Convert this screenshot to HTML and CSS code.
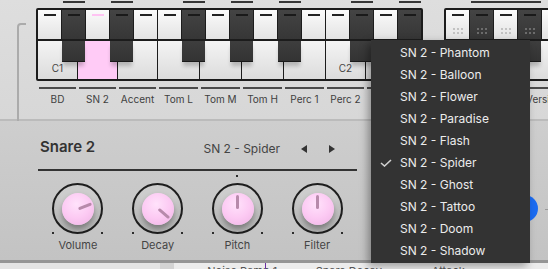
FILE: index.html
```html
<!DOCTYPE html>
<html lang="en">
<head>
    <meta charset="UTF-8">
    <title>Drum Kit - Snare 2</title>
    <link rel="stylesheet" href="styles.css">
</head>
<body>
    <div class="app">
        <div class="top-area">
            <div class="group-marks">
                <i></i><span></span><i></i><span></span><i></i><i></i><span></span><i></i><span></span><i></i><span></span><i></i><i></i><span></span><i></i><span></span><i></i><i></i><span class="wide"></span>
            </div>

            <div class="pad-groups">
                <div class="pad-group">
                    <div class="keyboard">
                        <div class="pads">
                            <div class="pad"></div>
                            <div class="pad dark"></div>
                            <div class="pad selected"></div>
                            <div class="pad dark"></div>
                            <div class="pad"></div>
                            <div class="pad"></div>
                            <div class="pad dark"></div>
                            <div class="pad"></div>
                            <div class="pad dark"></div>
                            <div class="pad"></div>
                            <div class="pad dark"></div>
                            <div class="pad"></div>
                            <div class="pad"></div>
                            <div class="pad dark"></div>
                            <div class="pad"></div>
                            <div class="pad dark"></div>
                        </div>
                        <div class="piano">
                            <div class="white"><span class="octave">C1</span></div>
                            <div class="white selected"></div>
                            <div class="white"></div>
                            <div class="white wide"></div>
                            <div class="white wide"></div>
                            <div class="white wide"></div>
                            <div class="white wide"></div>
                            <div class="white"><span class="octave">C2</span></div>
                            <div class="white rest"></div>
                            <div class="black k1"></div>
                            <div class="black k3"></div>
                            <div class="black k6"></div>
                            <div class="black k8"></div>
                            <div class="black k10"></div>
                            <div class="black k13"></div>
                            <div class="black k15"></div>
                        </div>
                    </div>
                    <div class="key-labels">
                        <div class="key-label">BD</div>
                        <div class="key-label">SN 2</div>
                        <div class="key-label">Accent</div>
                        <div class="key-label wide">Tom L</div>
                        <div class="key-label wide">Tom M</div>
                        <div class="key-label wide">Tom H</div>
                        <div class="key-label wide">Perc 1</div>
                        <div class="key-label">Perc 2</div>
                        <div class="key-label rest"></div>
                    </div>
                </div>

                <div class="pad-group">
                    <div class="keyboard keyboard-alt">
                        <div class="pads">
                            <div class="pad"><span class="dots"></span></div>
                            <div class="pad dark"><span class="dots"></span></div>
                            <div class="pad"><span class="dots"></span></div>
                            <div class="pad dark"><span class="dots"></span></div>
                            <div class="pad"><span class="dots"></span></div>
                            <div class="pad"><span class="dots"></span></div>
                        </div>
                        <div class="piano">
                            <div class="white"></div>
                            <div class="white"></div>
                            <div class="white"></div>
                            <div class="white rest"></div>
                            <div class="black k1"></div>
                            <div class="black k3"></div>
                        </div>
                    </div>
                    <div class="key-labels">
                        <div class="key-label"></div>
                        <div class="key-label"></div>
                        <div class="key-label">Versions</div>
                    </div>
                </div>
            </div>
        </div>

        <svg class="bracket" width="20" height="130" viewBox="0 0 20 130">
            <path d="M9 2 H4 Q1 2 1 5 V122 Q1 126 5 126 H12" fill="none" stroke="#ababab" stroke-width="2"/>
            <circle cx="13" cy="126" r="1.8" fill="#a0a0a0"/>
        </svg>

        <div class="lower">
            <div class="module">
                <div class="module-head">
                    <div class="module-title">Snare 2</div>
                    <div class="preset">
                        <span class="preset-name">SN 2 - Spider</span>
                        <span class="arrow prev"></span>
                        <span class="arrow next"></span>
                    </div>
                </div>

                <div class="knobs">
                    <div class="knob">
                        <div class="dial">
                            <div class="ring"></div>
                            <div class="cap"><span class="pointer" style="--angle: 68deg"></span></div>
                        </div>
                        <div class="knob-label">Volume</div>
                    </div>
                    <div class="knob">
                        <div class="dial">
                            <div class="ring"></div>
                            <div class="cap"><span class="pointer" style="--angle: 130deg"></span></div>
                        </div>
                        <div class="knob-label">Decay</div>
                    </div>
                    <div class="knob">
                        <div class="dial">
                            <span class="center-mark"></span>
                            <div class="ring"></div>
                            <div class="cap"><span class="pointer" style="--angle: 0deg"></span></div>
                        </div>
                        <div class="knob-label">Pitch</div>
                    </div>
                    <div class="knob">
                        <div class="dial">
                            <div class="ring"></div>
                            <div class="cap"><span class="pointer" style="--angle: 0deg"></span></div>
                        </div>
                        <div class="knob-label">Filter</div>
                    </div>
                </div>
            </div>
            <div class="toggle"></div>
            <span class="toggle-tick"></span>
        </div>

        <div class="status">
            <div class="status-side"></div>
            <div class="status-gap"></div>
            <div class="status-item first">Noise Ramp 1<span class="cursor"></span></div>
            <div class="status-item">Snare Decay</div>
            <div class="status-item">Attack</div>
        </div>

        <ul class="preset-menu">
            <li>SN 2 - Phantom</li>
            <li>SN 2 - Balloon</li>
            <li>SN 2 - Flower</li>
            <li>SN 2 - Paradise</li>
            <li>SN 2 - Flash</li>
            <li class="active">
                <svg class="check" width="12" height="8" viewBox="0 0 12 8"><polyline points="1,4 4.5,7 11,1" fill="none" stroke="#d0d0d0" stroke-width="1.6"/></svg>
                SN 2 - Spider
            </li>
            <li>SN 2 - Ghost</li>
            <li>SN 2 - Tattoo</li>
            <li>SN 2 - Doom</li>
            <li>SN 2 - Shadow</li>
        </ul>
    </div>
</body>
</html>
```

FILE: styles.css
```css
* {
    box-sizing: border-box;
}
body {
    margin: 0;
    font-family: Inter, "Noto Sans", sans-serif;
    color: #3c3c3c;
    background: #c6c6c6;
}
.app {
    position: relative;
    width: 548px;
    height: 269px;
    overflow: hidden;
}

/* top area: pads and keyboard */
.top-area {
    height: 121px;
    background: linear-gradient(#dedede, #d7d7d7);
    border-bottom: 2px solid #bbbbbb;
}
.group-marks {
    display: grid;
    grid-template-columns: repeat(22, 24px);
    height: 8px;
    padding: 1px 0 0 38px;
}
.group-marks span {
    height: 2px;
    margin: 0 1px;
    background: #363636;
}
.group-marks .wide {
    grid-column: span 3;
}
.pad-groups {
    display: flex;
    gap: 21px;
    padding-left: 36px;
}
.pad-group {
    display: flex;
    flex-direction: column;
}
.keyboard {
    border: 2px solid #1c1c1c;
    border-radius: 2px;
    background: #1c1c1c;
}
.pads {
    display: grid;
    grid-template-columns: repeat(16, 23px);
    column-gap: 1px;
    height: 29px;
}
.keyboard-alt .pads {
    grid-template-columns: repeat(6, 23px);
}
.pad {
    position: relative;
    background: linear-gradient(#fbfbfb, #e3e3e3);
    color: #c2c2c2;
}
.pad::before {
    content: "";
    position: absolute;
    top: 4px;
    left: 6px;
    width: 12px;
    height: 2px;
    background: #222;
}
.pad.dark {
    background: linear-gradient(#444444, #363636);
    color: #6c6c6c;
}
.pad.dark::before {
    background: #1a1a1a;
}
.pad.selected::before {
    background: #ffc4f3;
}
.dots {
    position: absolute;
    left: 6px;
    bottom: 4px;
    width: 12px;
    height: 8px;
    background-image: radial-gradient(circle, currentColor 1px, transparent 1.4px);
    background-size: 4px 4px;
}
.piano {
    position: relative;
    display: flex;
    gap: 1px;
    height: 38px;
    margin-top: 2px;
}
.white {
    display: flex;
    align-items: flex-end;
    justify-content: center;
    width: 39px;
    padding-bottom: 5px;
    background: linear-gradient(#f4f4f4, #dcdcdc);
}
.white.wide {
    width: 41px;
}
.white.rest {
    flex: 1;
}
.white.selected {
    background: #ffcbf6;
}
.octave {
    font-size: 10px;
    line-height: 12px;
    color: #444;
}
.black {
    position: absolute;
    top: 0;
    width: 23px;
    height: 21px;
    background: linear-gradient(#3e3e3e, #333333);
    border-bottom: 1px solid #1a1a1a;
    box-shadow: 0 5px 4px -1px rgba(0, 0, 0, 0.22);
}
.black.k1 { left: 24px; }
.black.k3 { left: 72px; }
.black.k6 { left: 144px; }
.black.k8 { left: 192px; }
.black.k10 { left: 240px; }
.black.k13 { left: 312px; }
.black.k15 { left: 360px; }

.key-labels {
    display: flex;
    gap: 1px;
    padding: 0 2px;
    margin-top: 6px;
}
.key-label {
    width: 39px;
    min-height: 18px;
    font-size: 10px;
    line-height: 12px;
    text-align: center;
    white-space: nowrap;
    color: #404040;
}
.key-label::before {
    content: "";
    display: block;
    height: 2px;
    margin: 0 1px 4px;
    background: #4a4a4a;
}
.key-label.wide {
    width: 41px;
}
.key-label.rest {
    width: 55px;
}

.bracket {
    position: absolute;
    top: 22px;
    left: 17px;
}

/* lower panel: instrument module */
.lower {
    position: relative;
    height: 139px;
    padding-left: 38px;
    background: linear-gradient(#cecece, #c3c3c3);
}
.module {
    width: 319px;
}
.module-head {
    display: flex;
    align-items: flex-end;
    height: 50px;
    padding: 0 19px 13px 2px;
    border-bottom: 2px solid #333;
}
.module-title {
    font-size: 15px;
    line-height: 18px;
    font-weight: 600;
    color: #333;
}
.preset {
    display: flex;
    align-items: center;
    margin-left: auto;
}
.preset-name {
    font-size: 12px;
    line-height: 15px;
    color: #444;
}
.arrow {
    width: 12px;
    height: 10px;
    display: flex;
    justify-content: center;
    align-items: center;
}
.arrow::before {
    content: "";
    border-top: 4px solid transparent;
    border-bottom: 4px solid transparent;
}
.arrow.prev {
    margin-left: 18px;
}
.arrow.prev::before {
    border-right: 6px solid #333;
}
.arrow.next {
    margin-left: 16px;
}
.arrow.next::before {
    border-left: 6px solid #333;
}

.knobs {
    display: flex;
    padding-top: 12px;
}
.knob {
    display: flex;
    flex-direction: column;
    align-items: center;
    width: 80px;
}
.dial {
    position: relative;
    width: 51px;
    height: 51px;
}
.dial::before,
.dial::after {
    content: "";
    position: absolute;
    top: 49px;
    width: 2px;
    height: 2px;
    background: #2c2c2c;
}
.dial::before {
    left: 0;
}
.dial::after {
    right: 0;
}
.center-mark {
    position: absolute;
    top: -8px;
    left: 24px;
    width: 2px;
    height: 2px;
    background: #2c2c2c;
}
.ring {
    position: absolute;
    inset: 0;
    border: 2px solid #1e1e1e;
    border-radius: 50%;
    background: radial-gradient(circle at 50% 30%, #cdcdcd 40%, #b9b9b9 75%);
}
.cap {
    position: absolute;
    top: 10px;
    left: 10px;
    width: 32px;
    height: 32px;
    border-radius: 50%;
    background: radial-gradient(circle at 45% 35%, #ffe2fb 0, #fccaf3 50%, #efb3e5 100%);
    box-shadow: 0 4px 6px rgba(0, 0, 0, 0.38);
}
.pointer {
    position: absolute;
    left: 14.5px;
    bottom: 50%;
    width: 3px;
    height: 14px;
    border-radius: 2px;
    background: #b78aab;
    transform-origin: 50% 100%;
    transform: rotate(var(--angle));
}
.knob-label {
    margin-top: 5px;
    font-size: 11px;
    line-height: 13px;
    color: #444;
}

.toggle {
    position: absolute;
    top: 74px;
    left: 511px;
    width: 27px;
    height: 27px;
    border-radius: 50%;
    background: #1b6cf2;
}
.toggle-tick {
    position: absolute;
    top: 88px;
    left: 545px;
    width: 4px;
    height: 1px;
    background: #9a9a9a;
}

/* status strip at the bottom */
.status {
    display: flex;
    height: 9px;
    border-top: 3px solid #959595;
    background: #ececec;
    overflow: hidden;
}
.status-side {
    width: 165px;
    background: #e4e4e4;
}
.status-gap {
    width: 15px;
    background: #d3d3d3;
}
.status-item {
    position: relative;
    width: 120px;
    padding-top: 2px;
    font-size: 11px;
    line-height: 13px;
    color: #555;
    white-space: nowrap;
}
.status-item.first {
    width: 112px;
    margin-left: 33px;
}
.cursor {
    position: absolute;
    top: 0;
    left: 58px;
    width: 1px;
    height: 8px;
    background: #6b2ea3;
}

/* preset dropdown */
.preset-menu {
    position: absolute;
    top: 40px;
    left: 371px;
    width: 159px;
    height: 223px;
    margin: 0;
    padding: 2px 0 0;
    list-style: none;
    background: #333333;
    box-shadow: -3px 3px 8px rgba(0, 0, 0, 0.35);
    z-index: 2;
}
.preset-menu li {
    position: relative;
    height: 22px;
    padding-left: 29px;
    font-size: 12px;
    line-height: 22px;
    color: #ececec;
    white-space: nowrap;
}
.check {
    position: absolute;
    top: 7px;
    left: 9px;
}
```
